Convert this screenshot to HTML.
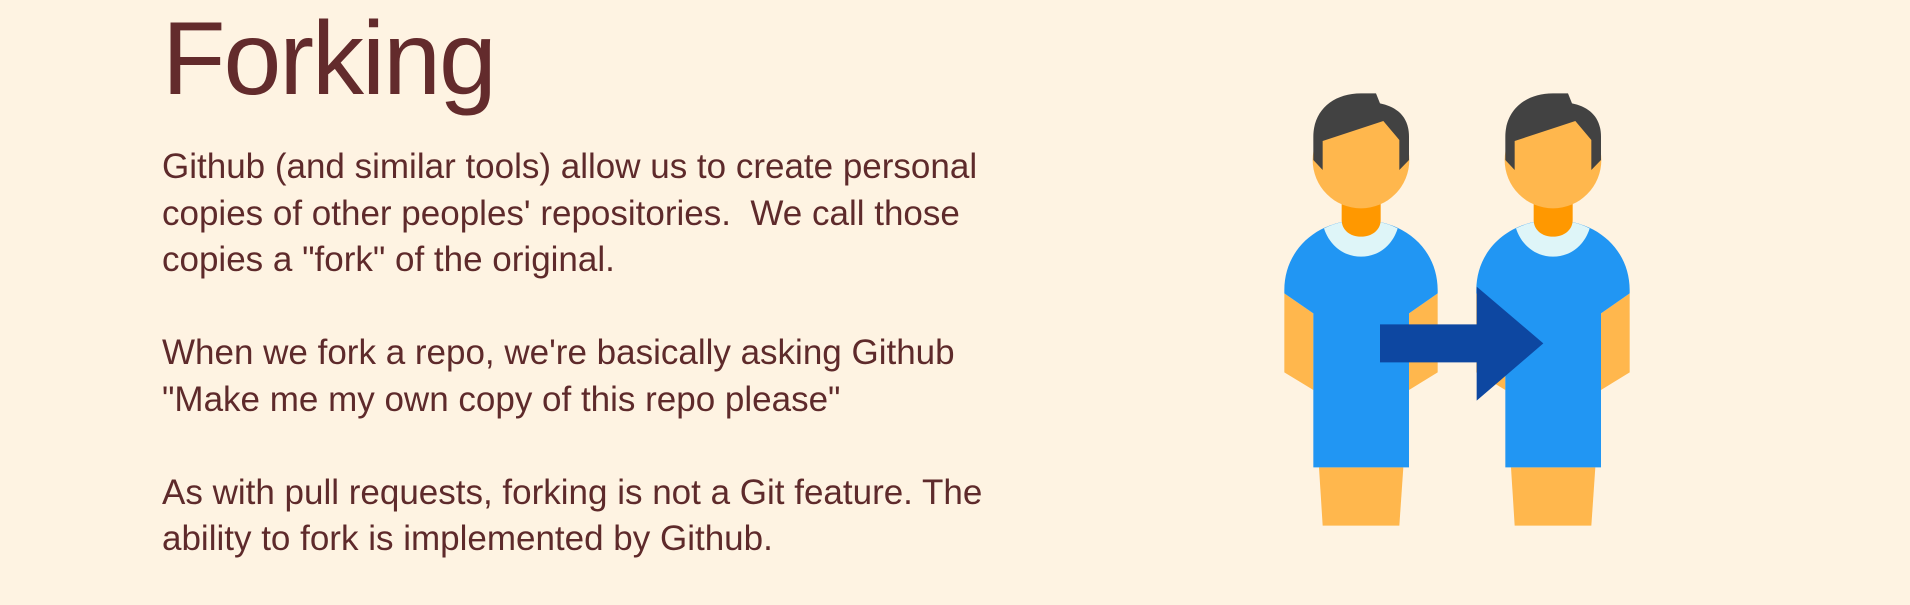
<!DOCTYPE html>
<html><head><meta charset="utf-8"><style>
html,body{margin:0;padding:0;}
body{width:1910px;height:605px;background:#fef3e2;position:relative;overflow:hidden;font-family:"Liberation Sans",sans-serif;color:#5e2a2b;}
h1{position:absolute;left:162px;top:0px;margin:0;font-size:104px;font-weight:normal;letter-spacing:-2px;line-height:118px;color:#632b2c;}
.t{position:absolute;left:162px;top:144px;font-size:35px;line-height:46.5px;white-space:pre;}
svg{position:absolute;left:1250px;top:60px;}
</style></head><body>
<h1>Forking</h1>
<div class="t">Github (and similar tools) allow us to create personal
copies of other peoples' repositories.  We call those
copies a "fork" of the original.

When we fork a repo, we're basically asking Github
"Make me my own copy of this repo please"

As with pull requests, forking is not a Git feature. The
ability to fork is implemented by Github.</div>
<svg width="430" height="490" viewBox="0 0 1290 1470">
<defs>
<g id="p">
<polygon points="103,700 190,760 190,990 103,937" fill="#ffb74d"/>
<polygon points="563,700 477,760 477,990 563,937" fill="#ffb74d"/>
<polygon points="207,1222 460,1222 448,1397 218,1397" fill="#ffb74d"/>
<path d="M103,700 L103,690 C103,570 200,480 333,480 C466,480 563,570 563,690 L563,700 L477,760 L477,1222 L190,1222 L190,760 Z" fill="#2196f3"/>
<path d="M222,505 C240,560 285,590 333,590 C381,590 426,560 443,505 C410,488 370,480 333,480 C296,480 256,488 222,505Z" fill="#def5f8"/>
<path d="M275,420 L275,480 C275,510 300,530 333,530 C366,530 392,510 392,480 L392,420 Z" fill="#ff9800"/>
<circle cx="333" cy="300" r="145" fill="#ffb74d"/>
<path d="M190,300 L190,230 C190,150 250,100 333,100 L378,100 L390,130 C440,140 477,170 477,230 L477,300 L448,330 L448,240 L400,183 L218,243 L218,330 L190,300 Z" fill="#424242"/>
</g>
</defs>
<use href="#p"/>
<use href="#p" x="576"/>
<polygon points="390,793 680,793 680,680 880,850 680,1022 680,907 390,907" fill="#0d47a1"/>
</svg>
</body></html>
